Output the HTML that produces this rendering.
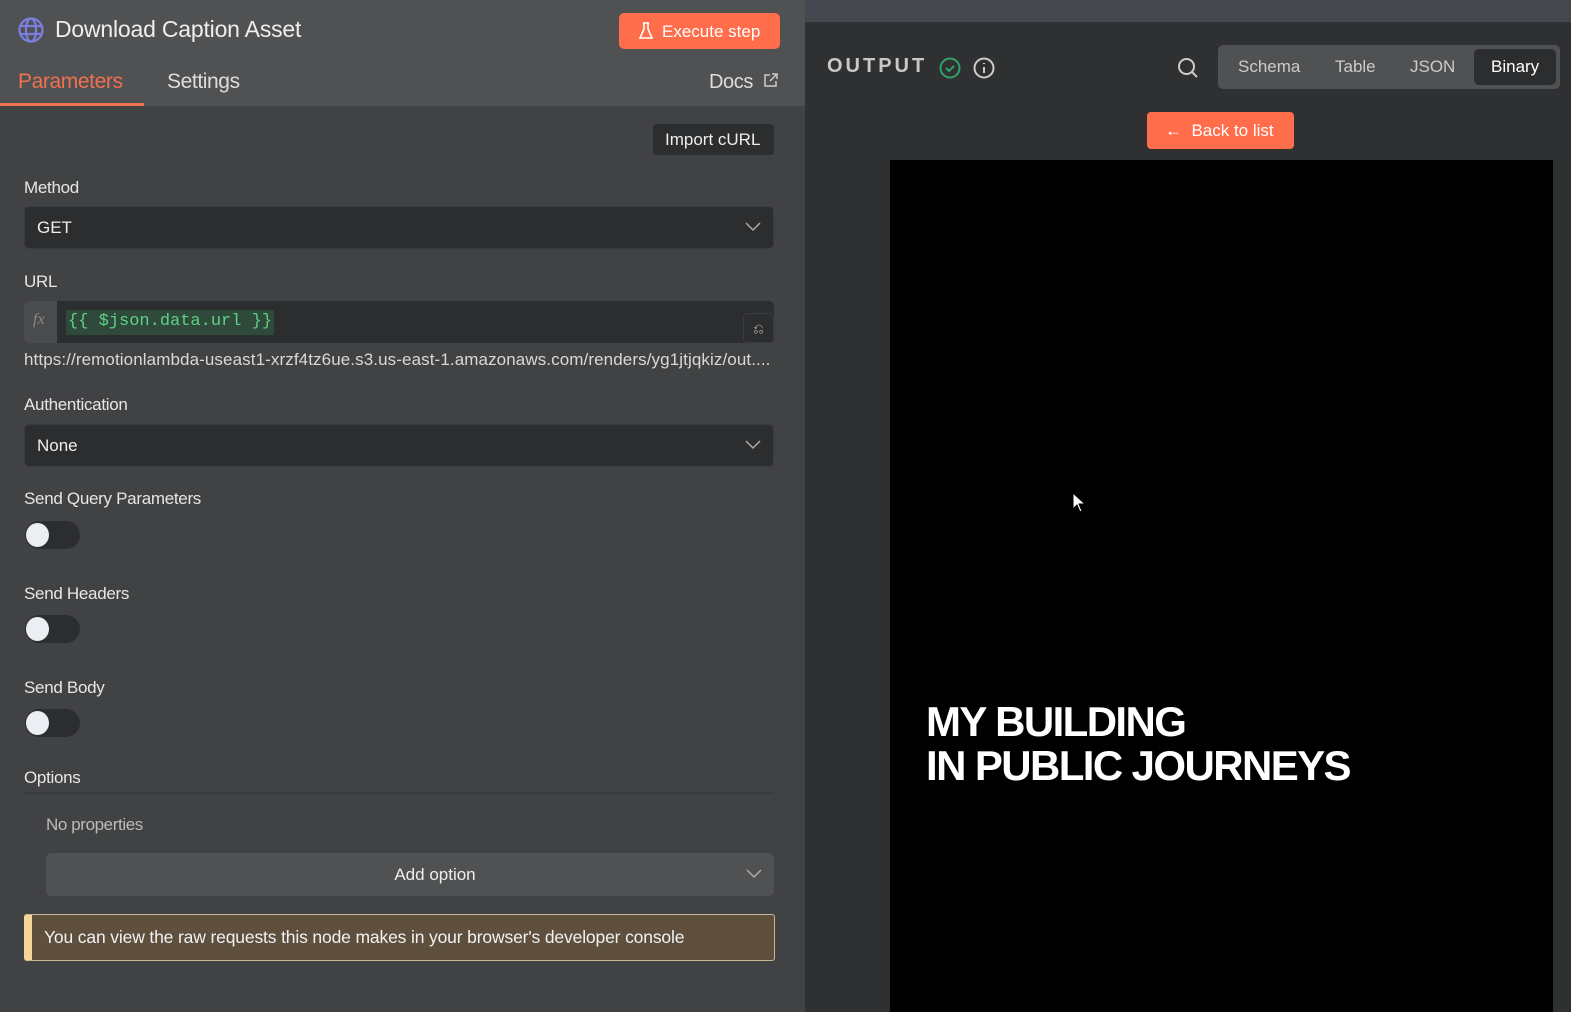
<!DOCTYPE html>
<html><head><meta charset="utf-8"><style>
*{box-sizing:border-box;margin:0;padding:0}
body{width:1571px;height:1012px;overflow:hidden;font-family:"Liberation Sans",sans-serif;background:#2e3032;position:relative;color:#e8e8e8}
.a{position:absolute}
.left{left:0;top:0;width:805px;height:1012px;background:#414244}
.hdr{left:0;top:0;width:805px;height:106px;background:#505153}
.lbl{position:absolute;left:24px;font-size:17px;color:#e6e6e6;letter-spacing:-0.3px}
.sel{position:absolute;left:24px;width:750px;height:43px;background:#2c2d2e;border:1px solid #3a3b3d;border-radius:5px;font-size:17px;color:#eee;padding:11px 12px}
.chev{position:absolute;right:12px;top:15px}
.tog{position:absolute;left:25px;width:55px;height:28px;border-radius:14px;background:#2c2d2e}
.tog::after{content:"";position:absolute;left:1px;top:2px;width:23px;height:24px;border-radius:50%;background:#eceef4}
</style></head><body>
<div class="a left"></div>
<div class="a hdr"></div>
<svg class="a" style="left:17px;top:16px" width="28" height="28" viewBox="0 0 28 28" fill="none" stroke="#7b7fe0" stroke-width="2.2"><circle cx="14" cy="14" r="11.5"/><ellipse cx="14" cy="14" rx="5" ry="11.5"/><path d="M3 10h22M3 18h22"/></svg>
<div class="a" style="left:55px;top:16px;font-size:23px;color:#eee;letter-spacing:-0.2px">Download Caption Asset</div>
<div class="a" style="left:619px;top:13px;width:161px;height:36px;background:#ff6d4a;border-radius:5px;color:#fff;font-size:17px;padding:9px 0 0 43px">Execute step</div>
<svg class="a" style="left:638px;top:22px" width="16" height="18" viewBox="0 0 16 18" fill="none" stroke="#fff" stroke-width="1.6"><path d="M5 1h6M6 1v6L2 16h12L10 7V1"/></svg>
<div class="a" style="left:18px;top:70px;font-size:21px;color:#f0714e;letter-spacing:-0.4px">Parameters</div>
<div class="a" style="left:0;top:103px;width:144px;height:3px;background:#f0714e"></div>
<div class="a" style="left:167px;top:70px;font-size:21px;color:#ddd;letter-spacing:-0.4px">Settings</div>
<div class="a" style="left:709px;top:71px;font-size:20px;color:#ddd;letter-spacing:-0.4px">Docs</div>
<svg class="a" style="left:763px;top:72px" width="16" height="16" viewBox="0 0 16 16" fill="none" stroke="#ccc" stroke-width="1.5"><path d="M7 3H2v11h11V9M9 2h5v5M14 2L7 9"/></svg>
<div class="a" style="left:653px;top:124px;width:121px;height:31px;background:#2c2d2e;border-radius:4px;font-size:17px;color:#eee;padding:6px 0 0 12px">Import cURL</div>
<div class="lbl" style="top:178px">Method</div>
<div class="sel" style="top:206px">GET<svg class="chev" width="16" height="10" viewBox="0 0 16 10" fill="none" stroke="#aaa" stroke-width="1.5"><path d="M1 1l7 7 7-7"/></svg></div>
<div class="lbl" style="top:272px">URL</div>
<div class="a" style="left:24px;top:301px;width:750px;height:42px;background:#2c2d2e;border-radius:5px"></div>
<div class="a" style="left:24px;top:301px;width:33px;height:42px;background:#4a4b4d;border-radius:5px 0 0 5px;color:#888;font-family:'Liberation Serif',serif;font-style:italic;font-size:16px;padding:10px 0 0 9px">fx</div>
<div class="a" style="left:66px;top:310px;height:25px;background:#2f4a3a;color:#5fd08a;font-family:'Liberation Mono',monospace;font-size:17px;padding:2px 2px">{{ $json.data.url }}</div>
<div class="a" style="left:743px;top:313px;width:31px;height:30px;border:1px solid #3a3b3d;background:#2c2d2e;border-radius:4px;color:#ccc;font-size:13px;text-align:center;padding-top:7px">⎌</div>
<div class="a" style="left:24px;top:350px;font-size:17px;color:#d8d8d8;letter-spacing:0.1px;white-space:nowrap">https://remotionlambda-useast1-xrzf4tz6ue.s3.us-east-1.amazonaws.com/renders/yg1jtjqkiz/out....</div>
<div class="lbl" style="top:395px">Authentication</div>
<div class="sel" style="top:424px">None<svg class="chev" width="16" height="10" viewBox="0 0 16 10" fill="none" stroke="#aaa" stroke-width="1.5"><path d="M1 1l7 7 7-7"/></svg></div>
<div class="lbl" style="top:489px">Send Query Parameters</div>
<div class="tog" style="top:521px"></div>
<div class="lbl" style="top:584px">Send Headers</div>
<div class="tog" style="top:615px"></div>
<div class="lbl" style="top:678px">Send Body</div>
<div class="tog" style="top:709px"></div>
<div class="lbl" style="top:768px">Options</div>
<div class="a" style="left:24px;top:792px;width:750px;height:2px;background:#3a3b3d"></div>
<div class="a" style="left:46px;top:815px;font-size:17px;color:#bbb;letter-spacing:-0.4px">No properties</div>
<div class="a" style="left:46px;top:853px;width:728px;height:43px;background:#505153;border-radius:5px;text-align:center;font-size:17px;color:#eee;padding:12px 0 0 50px">Add option<svg style="position:absolute;right:12px;top:16px" width="16" height="10" viewBox="0 0 16 10" fill="none" stroke="#aaa" stroke-width="1.5"><path d="M1 1l7 7 7-7"/></svg></div>
<div class="a" style="left:24px;top:914px;width:751px;height:47px;background:#5e503d;border:1px solid #c8b89a;border-left:8px solid #f5d59a;border-radius:3px;font-size:17.5px;color:#f2f2f2;padding:12px 0 0 12px;letter-spacing:-0.15px">You can view the raw requests this node makes in your browser's developer console</div>
<div class="a" style="left:805px;top:0;width:766px;height:22px;background:#45464e"></div>
<div class="a" style="left:827px;top:55px;font-size:20px;font-weight:bold;letter-spacing:3px;color:#c8c8c8">OUTPUT</div>
<svg class="a" style="left:938px;top:56px" width="24" height="24" viewBox="0 0 24 24" fill="none" stroke="#2fa36b" stroke-width="2"><circle cx="12" cy="12" r="9.5"/><path d="M8 12l3 3 5-5"/></svg>
<svg class="a" style="left:972px;top:56px" width="24" height="24" viewBox="0 0 24 24" fill="none" stroke="#ccc" stroke-width="2"><circle cx="12" cy="12" r="9.5"/><path d="M12 11v6M12 7v1"/></svg>
<svg class="a" style="left:1176px;top:56px" width="24" height="24" viewBox="0 0 24 24" fill="none" stroke="#ccc" stroke-width="2"><circle cx="10.5" cy="10.5" r="7.5"/><path d="M16 16l5 5"/></svg>
<div class="a" style="left:1218px;top:45px;width:342px;height:44px;background:#505153;border-radius:5px"></div>
<div class="a" style="left:1474px;top:49px;width:82px;height:36px;background:#2c2d2e;border-radius:5px"></div>
<div class="a" style="left:1238px;top:57px;font-size:17px;color:#ccc">Schema</div>
<div class="a" style="left:1335px;top:57px;font-size:17px;color:#ccc">Table</div>
<div class="a" style="left:1410px;top:57px;font-size:17px;color:#ccc">JSON</div>
<div class="a" style="left:1491px;top:57px;font-size:17px;color:#fff">Binary</div>
<div class="a" style="left:1147px;top:112px;width:147px;height:37px;background:#ff6d4a;border-radius:4px;color:#fff;font-size:17px;padding:9px 0 0 18px">←&nbsp; Back to list</div>
<div class="a" style="left:890px;top:160px;width:663px;height:852px;background:#000"></div>
<div class="a" style="left:926px;top:700px;font-size:42px;font-weight:bold;color:#fff;line-height:44px;letter-spacing:-1.6px">MY BUILDING<br>IN PUBLIC JOURNEYS</div>
<svg class="a" style="left:1072px;top:492px" width="14" height="22" viewBox="0 0 14 22"><path d="M1 1v16l4-4 3 7 2-1-3-7h6z" fill="#fff" stroke="#000"/></svg>
</body></html>
